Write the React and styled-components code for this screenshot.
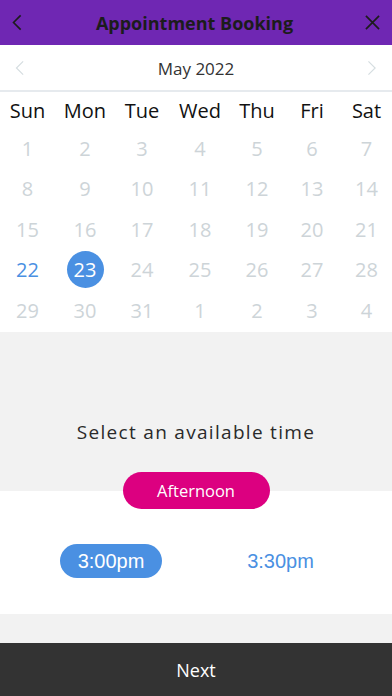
import styled, { createGlobalStyle } from "styled-components";

const GlobalStyle = createGlobalStyle`
  html, body {
    margin: 0;
    padding: 0;
    background: #f2f2f2;
  }
  * { box-sizing: border-box; }
`;

const Page = styled.div`
  display: flex;
  flex-direction: column;
  width: 392px;
  height: 696px;
  background: #f2f2f2;
  font-family: "Open Sans", sans-serif;
  overflow: hidden;
`;

const Header = styled.div`
  display: flex;
  align-items: center;
  justify-content: space-between;
  height: 45px;
  padding: 0 11px 0 8px;
  background: #6f27b3;
`;

const Title = styled.h1`
  margin: 0;
  font-size: 18px;
  font-weight: 700;
  color: #1c1c1c;
`;

const IconButton = styled.div`
  display: flex;
  align-items: center;
  justify-content: center;
  width: 18px;
  height: 24px;
`;

const MonthBar = styled.div`
  display: flex;
  align-items: center;
  justify-content: space-between;
  height: 47px;
  padding: 0 15px;
  padding-top: 1px;
  background: #fff;
  border-bottom: 2px solid #e6eaee;
`;

const MonthLabel = styled.span`
  font-size: 17px;
  color: #333;
`;

const Calendar = styled.div`
  display: grid;
  grid-template-columns: 55px 60px 54px 62px 52px 58px 51px;
  grid-template-rows: 36px;
  grid-auto-rows: 40.5px;
  background: #fff;
  padding: 0 0 1px;
`;

const WeekDay = styled.div`
  display: flex;
  align-items: center;
  justify-content: center;
  font-size: 20px;
  color: #111;
`;

const Day = styled.div`
  display: flex;
  align-items: center;
  justify-content: center;
  font-size: 20px;
  color: ${(p) => (p.$today ? "#4a90e2" : "#cdd4d8")};
`;

const Selected = styled.span`
  display: flex;
  align-items: center;
  justify-content: center;
  width: 37px;
  height: 37px;
  border-radius: 50%;
  background: #4a90e2;
  color: #fff;
`;

const TimeIntro = styled.div`
  display: flex;
  align-items: flex-end;
  justify-content: center;
  height: 116px;
  padding-bottom: 3px;
  font-size: 19px;
  line-height: 26px;
  letter-spacing: 1.3px;
  color: #2a2a2a;
`;

const PeriodWrap = styled.div`
  display: flex;
  justify-content: center;
  padding-top: 24px;
  background: linear-gradient(#f2f2f2 0 43px, #fff 43px);
`;

const PeriodPill = styled.div`
  display: flex;
  align-items: center;
  justify-content: center;
  width: 147px;
  height: 37px;
  border-radius: 19px;
  background: #dc0080;
  color: #fff;
  font-size: 16.5px;
`;

const Slots = styled.div`
  display: grid;
  grid-template-columns: 1fr 1fr;
  align-items: center;
  height: 105px;
  padding: 0 38px 0 60px;
  background: #fff;
`;

const Slot = styled.div`
  display: flex;
  align-items: center;
  justify-content: center;
  justify-self: ${(p) => (p.$active ? "start" : "center")};
  width: 102px;
  height: 34px;
  border-radius: 17px;
  font-family: "Liberation Sans", Arial, sans-serif;
  font-size: 20px;
  background: ${(p) => (p.$active ? "#4a90e2" : "transparent")};
  color: ${(p) => (p.$active ? "#fff" : "#4a90e2")};
`;

const Spacer = styled.div`
  flex: 1;
`;

const Footer = styled.div`
  display: flex;
  align-items: center;
  justify-content: center;
  height: 53px;
  background: #333;
  color: #fff;
  font-size: 18px;
`;

const Chevron = ({ dir = "left", color, size = 16, width = 1.5 }) => (
  <svg width={size * 0.6} height={size} viewBox="0 0 10 16" fill="none">
    <path
      d={dir === "left" ? "M8.5 1 L1.5 8 L8.5 15" : "M1.5 1 L8.5 8 L1.5 15"}
      stroke={color}
      strokeWidth={width}
    />
  </svg>
);

const weekDays = ["Sun", "Mon", "Tue", "Wed", "Thu", "Fri", "Sat"];
const days = [
  ...Array.from({ length: 31 }, (_, i) => i + 1),
  1, 2, 3, 4,
];

export default function App() {
  return (
    <Page>
      <GlobalStyle />
      <Header>
        <IconButton>
          <Chevron color="#1c1c1c" size={17} width={1.6} />
        </IconButton>
        <Title>Appointment Booking</Title>
        <IconButton>
          <svg width="15" height="15" viewBox="0 0 16 16">
            <path d="M1 1 L15 15 M15 1 L1 15" stroke="#1c1c1c" strokeWidth="1.8" />
          </svg>
        </IconButton>
      </Header>
      <MonthBar>
        <Chevron color="#d5dde0" size={16} width={1.2} />
        <MonthLabel>May 2022</MonthLabel>
        <Chevron dir="right" color="#d5dde0" size={16} width={1.2} />
      </MonthBar>
      <Calendar>
        {weekDays.map((d) => (
          <WeekDay key={d}>{d}</WeekDay>
        ))}
        {days.map((d, i) => (
          <Day key={i} $today={i === 21}>
            {i === 22 ? <Selected>{d}</Selected> : d}
          </Day>
        ))}
      </Calendar>
      <TimeIntro>Select an available time</TimeIntro>
      <PeriodWrap>
        <PeriodPill>Afternoon</PeriodPill>
      </PeriodWrap>
      <Slots>
        <Slot $active>3:00pm</Slot>
        <Slot>3:30pm</Slot>
      </Slots>
      <Spacer />
      <Footer>Next</Footer>
    </Page>
  );
}
